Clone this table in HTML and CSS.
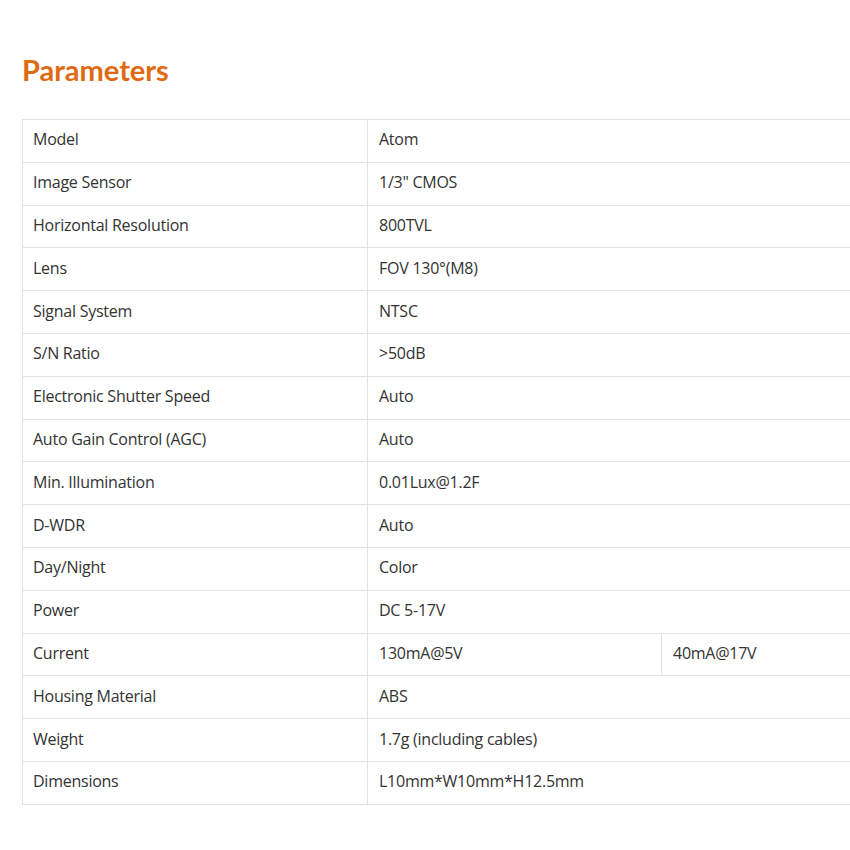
FILE: index.html
```html
<!DOCTYPE html>
<html>
<head>
<meta charset="utf-8">
<link rel="stylesheet" href="styles.css">
</head>
<body>
<div class="page">
  <h2 class="title">Parameters</h2>
  <div class="table-wrap">
  <table class="params">
    <colgroup><col class="c1"><col class="c2"><col class="c3"></colgroup>
    <tbody>
      <tr><td>Model</td><td colspan="2">Atom</td></tr>
      <tr><td>Image Sensor</td><td colspan="2">1/3" CMOS</td></tr>
      <tr><td>Horizontal Resolution</td><td colspan="2">800TVL</td></tr>
      <tr><td>Lens</td><td colspan="2">FOV 130°(M8)</td></tr>
      <tr><td>Signal System</td><td colspan="2">NTSC</td></tr>
      <tr><td>S/N Ratio</td><td colspan="2">&gt;50dB</td></tr>
      <tr><td>Electronic Shutter Speed</td><td colspan="2">Auto</td></tr>
      <tr><td>Auto Gain Control (AGC)</td><td colspan="2">Auto</td></tr>
      <tr><td>Min. Illumination</td><td colspan="2">0.01Lux@1.2F</td></tr>
      <tr><td>D-WDR</td><td colspan="2">Auto</td></tr>
      <tr><td>Day/Night</td><td colspan="2">Color</td></tr>
      <tr><td>Power</td><td colspan="2">DC 5-17V</td></tr>
      <tr><td>Current</td><td>130mA@5V</td><td>40mA@17V</td></tr>
      <tr><td>Housing Material</td><td colspan="2">ABS</td></tr>
      <tr><td>Weight</td><td colspan="2">1.7g (including cables)</td></tr>
      <tr><td>Dimensions</td><td colspan="2">L10mm*W10mm*H12.5mm</td></tr>
    </tbody>
  </table>
  </div>
</div>
</body>
</html>
```
FILE: styles.css
```css
html, body {
  margin: 0;
  padding: 0;
  background: #ffffff;
  overflow: hidden;
}
.page {
  padding: 52px 0 0 22px;
  font-family: "Open Sans", "Noto Sans", sans-serif;
  color: #333333;
}
.title {
  margin: 0 0 31px 0;
  font-family: "Lato", "Open Sans", sans-serif;
  font-weight: 700;
  font-size: 29px;
  line-height: 36px;
  color: #e06a12;
}
.table-wrap {
  overflow: hidden;
  width: 828px;
}
.params {
  border-collapse: collapse;
  table-layout: fixed;
  width: 933px;
}
.c1 { width: 345px; }
.c2 { width: 294px; }
.c3 { width: 294px; }
.params td {
  border: 1px solid #e2e2e2;
  height: 42.8px;
  box-sizing: border-box;
  padding: 0 10px 3px 10px;
  font-size: 16px;
  letter-spacing: -0.25px;
  vertical-align: middle;
  white-space: nowrap;
}
.params td + td {
  padding-left: 11px;
}
```
